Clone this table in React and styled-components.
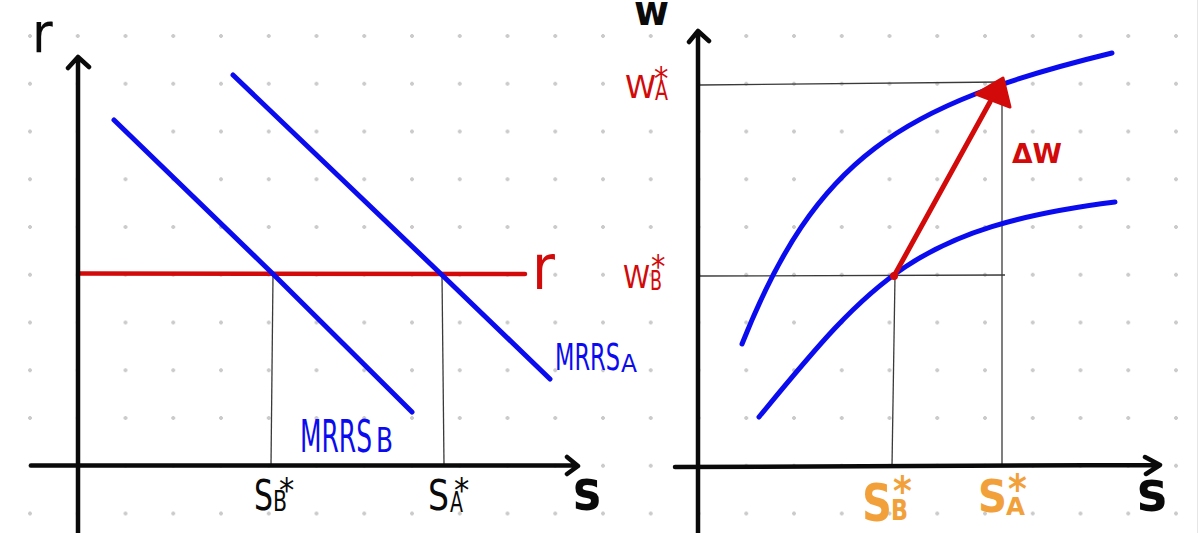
import styled, { createGlobalStyle } from 'styled-components';

const INK = '#0a0a0a';
const BLUE = '#0b0bf0';
const RED = '#d20a0a';
const ORANGE = '#f2a13a';
const HAND = '"DejaVu Sans Condensed", "Liberation Sans Narrow", "DejaVu Sans", sans-serif';

const GlobalStyle = createGlobalStyle`
  html, body {
    margin: 0;
    padding: 0;
    background: #ffffff;
  }
`;

// dotted paper: dots every 47.75px starting at (30, 36)
const Sheet = styled.main`
  display: flex;
  width: 1197px;
  height: 533px;
  overflow: hidden;
  border-right: 1px solid #e6e6e6;
  background-color: #ffffff;
  background-image: radial-gradient(circle, #cbcbcb 1.6px, transparent 2.2px);
  background-size: 47.75px 47.75px;
  background-position: 6.125px 12.125px;
`;

const Panel = styled.section`
  flex: 0 0 ${({ $width }) => $width}px;
  height: 533px;
`;

const Plot = styled.svg`
  display: block;
  width: 100%;
  height: 100%;
  overflow: visible;
`;

const Axis = styled.path`
  fill: none;
  stroke: ${INK};
  stroke-width: 4.5;
  stroke-linecap: round;
  stroke-linejoin: round;
`;

const Guide = styled.line`
  stroke: #3a3a3a;
  stroke-width: 1.3;
`;

const Curve = styled.path`
  fill: none;
  stroke: ${({ $tone }) => $tone};
  stroke-width: ${({ $weight }) => $weight || 5};
  stroke-linecap: round;
  stroke-linejoin: round;
`;

const Head = styled.polygon`
  fill: ${RED};
  stroke: ${RED};
  stroke-width: 3;
  stroke-linejoin: round;
`;

const Glyph = styled.text`
  fill: ${({ $tone }) => $tone || INK};
  font-family: ${HAND};
  font-size: ${({ $size }) => $size}px;
  font-weight: ${({ $bold }) => ($bold ? 700 : 400)};
`;

const Part = styled.tspan`
  font-size: ${({ $size }) => $size}px;
`;

// a letter with an optional subscript and star, as one text
function Mark({ x, y, text, size, len, sub, star, tone, bold }) {
  return (
    <Glyph x={x} y={y} $size={size} $tone={tone} $bold={bold}>
      <Part $size={size} textLength={len} lengthAdjust="spacingAndGlyphs">{text}</Part>
      {sub && (
        <Part x={sub.x} y={sub.y} $size={sub.size} textLength={sub.len} lengthAdjust="spacingAndGlyphs">
          {sub.text}
        </Part>
      )}
      {star && (
        <Part x={star.x} y={star.y} $size={star.size}>*</Part>
      )}
    </Glyph>
  );
}

function RateChart() {
  return (
    <Panel $width={600}>
      <Plot viewBox="0 0 600 533">
        <Guide x1="273" y1="275" x2="271" y2="465" />
        <Guide x1="442" y1="275" x2="444" y2="465" />

        <Curve $tone={RED} $weight={4.5} d="M80,273.5 L525,274" />
        <Curve $tone={BLUE} d="M114,120 L272,273 L412,412" />
        <Curve $tone={BLUE} d="M233,75 L442,275 L550,379" />

        <Axis d="M78,533 L78,57 M68,68 L78,57 L89,67" />
        <Axis d="M31,465.5 L577,465.5 M567,457 L578,466 L567,474" />

        <Glyph x="32" y="52" $size={56}>r</Glyph>
        <Glyph x="532" y="289" $size={62} $tone={RED}>r</Glyph>

        <Mark x={300} y={452} text="MRRS" size={44} len={72} tone={BLUE}
          sub={{ x: 376, y: 452, text: 'B', size: 34, len: 17 }} />
        <Mark x={555} y={370} text="MRRS" size={38} len={65} tone={BLUE}
          sub={{ x: 621, y: 372, text: 'A', size: 24, len: 16 }} />

        <Mark x={254} y={510} text="S" size={42} len={19}
          sub={{ x: 273, y: 511, text: 'B', size: 28, len: 14 }}
          star={{ x: 279, y: 502, size: 34 }} />
        <Mark x={428} y={510} text="S" size={42} len={21}
          sub={{ x: 450, y: 512, text: 'A', size: 28, len: 13 }}
          star={{ x: 454, y: 502, size: 34 }} />

        <Glyph x="573" y="509" $size={56} $bold textLength="28" lengthAdjust="spacingAndGlyphs">s</Glyph>
      </Plot>
    </Panel>
  );
}

function WealthChart() {
  return (
    <Panel $width={597}>
      <Plot viewBox="600 0 597 533">
        <Guide x1="700" y1="85" x2="1002" y2="82" />
        <Guide x1="700" y1="276" x2="1005" y2="275" />
        <Guide x1="1002" y1="82" x2="1002" y2="466" />
        <Guide x1="895" y1="276" x2="892" y2="466" />

        <Curve $tone={BLUE} d="M742,344 C816,158 899,105 1112,53" />
        <Curve $tone={BLUE} d="M759,417 C873,278 917,227 1115,202" />

        <Curve $tone={RED} d="M894,276 L990,102" />
        <Head points="976,94 1003,78 1010,107" />
        <circle cx="894" cy="276" r="4" fill={RED} />

        <Axis d="M698,533 L698,31 M689,42 L698,31 L709,41" />
        <Axis d="M675,467 L1159,465 M1145,457 L1160,465 L1146,474" />

        <Glyph x="634" y="25" $size={43} $bold textLength="35" lengthAdjust="spacingAndGlyphs">w</Glyph>

        <Mark x={625} y={98} text="W" size={32} len={31} tone={RED}
          sub={{ x: 655, y: 100, text: 'A', size: 26, len: 13 }}
          star={{ x: 654, y: 89, size: 32 }} />
        <Mark x={623} y={288} text="W" size={32} len={27} tone={RED}
          sub={{ x: 650, y: 290, text: 'B', size: 26, len: 12 }}
          star={{ x: 651, y: 277, size: 32 }} />

        <Glyph x="1012" y="163" $size={26} $bold $tone={RED} textLength="50" lengthAdjust="spacingAndGlyphs">ΔW</Glyph>

        <Mark x={862} y={521} text="S" size={52} len={30} tone={ORANGE} bold
          sub={{ x: 891, y: 520, text: 'B', size: 28, len: 17 }}
          star={{ x: 893, y: 505, size: 40 }} />
        <Mark x={978} y={512} text="S" size={44} len={29} tone={ORANGE} bold
          sub={{ x: 1006, y: 515, text: 'A', size: 25, len: 19 }}
          star={{ x: 1008, y: 503, size: 40 }} />

        <Glyph x="1137" y="510" $size={56} $bold textLength="30" lengthAdjust="spacingAndGlyphs">s</Glyph>
      </Plot>
    </Panel>
  );
}

export default function App() {
  return (
    <>
      <GlobalStyle />
      <Sheet>
        <RateChart />
        <WealthChart />
      </Sheet>
    </>
  );
}
